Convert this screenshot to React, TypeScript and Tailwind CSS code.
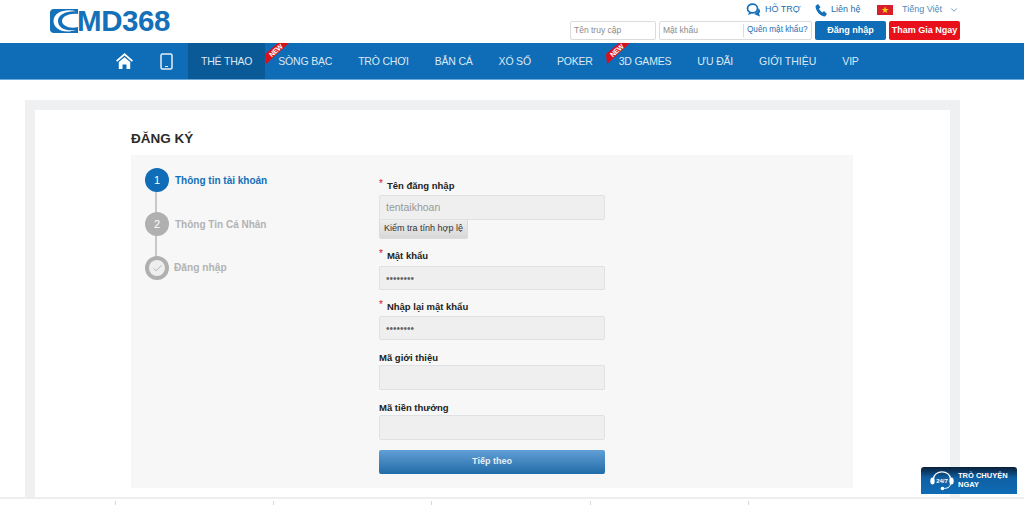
import React from "react";
import { ChevronDown, Check } from "lucide-react";

const navItems = [
    { label: "THỂ THAO", active: true },
    { label: "SÒNG BẠC", badge: true },
    { label: "TRÒ CHƠI" },
    { label: "BẮN CÁ" },
    { label: "XỔ SỐ" },
    { label: "POKER" },
    { label: "3D GAMES", badge: true },
    { label: "ƯU ĐÃI" },
    { label: "GIỚI THIỆU", wide: true },
    { label: "VIP" },
];

function NewBadge() {
    return (
        <div className="absolute left-0 top-0 w-[24px] h-[21px]">
            <svg width="24" height="21" viewBox="0 0 24 21" className="block">
                <polygon points="13,0 24,0 1,21 0,11" fill="#d9101a" />
            </svg>
            <span className="absolute left-[3px] top-[3px] text-[7px] leading-[9px] font-bold text-white -rotate-[42deg]">NEW</span>
        </div>
    );
}

function Logo() {
    return (
        <div className="flex items-center text-[#1470b8] h-[24px]">
            <svg width="28" height="24" viewBox="0 0 28 24" className="block">
                <path d="M4 0 H28 V24 H4 Q0 24 0 20 V4 Q0 0 4 0 Z" fill="#1470b8" />
                <path d="M27 2.5 C16 -1 3.5 3 3.5 12 C3.5 20.5 14 25 26 21 C16 22.5 8 19 8 12 C8 5.5 17 1.5 27 2.5 Z" fill="#fff" />
                <path d="M28 5 C20 4 12 7 12 12 C12 17 20 20 28 18 Z" fill="#fff" />
            </svg>
            <span className="text-[29.5px] leading-[24px] font-bold tracking-[-0.4px] ml-[-1px]">MD368</span>
        </div>
    );
}

function Field({ label, required, value, dots, inputClass }: { label: string; required?: boolean; value?: string; dots?: boolean; inputClass: string }) {
    return (
        <div className="flex flex-col">
            <div className="flex items-start h-[15px] text-[9.5px] leading-[15px] font-bold text-[#222]">
                {required && <span className="text-[#d9101a] font-normal mr-[4px] text-[10px] leading-[12px]">*</span>}
                <span>{label}</span>
            </div>
            <div
                className={`${inputClass} w-full border border-[#dfe2e4] rounded-[2px] bg-[#efefef] flex items-center px-[6px] ${dots ? "text-[10px] text-[#666]" : "text-[10.5px] text-[#999]"}`}
            >
                {value}
            </div>
        </div>
    );
}

export default function App() {
    return (
        <div className="w-[1024px] h-[505px] overflow-hidden relative bg-white font-['Liberation_Sans',Arial,sans-serif]">
            {/* top bar */}
            <div className="h-[43px] flex justify-between pl-[50px] pr-[64px]">
                <div className="pt-[9px]">
                    <Logo />
                </div>
                <div className="flex flex-col items-end pt-[2px]">
                    <div className="h-[14px] flex items-center text-[9px] text-[#1f6fae] mt-[1px] -mb-[1px]">
                        <svg width="15" height="14" viewBox="0 0 15 14" className="block mr-[4px]">
                            <ellipse cx="6.5" cy="5.5" rx="5" ry="4.3" fill="none" stroke="#1470b8" strokeWidth="1.7" />
                            <path d="M3 9.5 L2 12 L6 10.5 Z" fill="#1470b8" />
                            <path d="M12.5 5 C14.5 7 14.5 9.5 13 10.5 L14 13.5 L9 11.5 L8 10.8 C10 10.5 12.5 8 12.5 5 Z" fill="#1470b8" />
                        </svg>
                        <span className="w-[50px]">HỖ TRỢ</span>
                        <svg width="12" height="13" viewBox="0 0 12 13" className="block mr-[4px]">
                            <path d="M0.5 2 L3 0 L5.5 3.2 L4 4.8 C4.5 6.2 6 7.8 7.5 8.5 L9 7 L12 10 L10 12.5 C5.5 12.5 0.5 7 0.5 2 Z" fill="#1470b8" />
                        </svg>
                        <span className="w-[46px]">Liên hệ</span>
                        <div className="w-[16px] h-[10px] bg-[#d8202a] flex items-center justify-center text-[9px] leading-[10px] text-[#f7d417] mr-[9px]">★</div>
                        <span className="w-[47px] text-[#4f8cbd]">Tiếng Việt</span>
                        <ChevronDown size={10} className="text-[#4f8cbd] mr-[1px]" />
                    </div>
                    <div className="flex items-center mt-[5px]">
                        <div className="w-[86px] h-[19px] border border-[#dcdcdc] rounded-[2px] flex items-center px-[3px] text-[8.5px] text-[#8a8a8a]">Tên truy cập</div>
                        <div className="ml-[3px] w-[153px] h-[19px] border border-[#dcdcdc] rounded-[2px] flex items-center text-[8.5px]">
                            <span className="w-[84px] pl-[3px] text-[#8a8a8a] border-r border-[#dcdcdc] leading-[13px]">Mật khẩu</span>
                            <span className="pl-[3px] text-[8.2px] text-[#1f6fae]">Quên mật khẩu?</span>
                        </div>
                        <button className="ml-[3px] w-[71px] h-[19px] bg-[#0f6cb6] rounded-[2px] text-white text-[9px] font-bold">Đăng nhập</button>
                        <button className="ml-[3px] w-[71px] h-[19px] bg-[#e8101a] rounded-[2px] text-white text-[9px] font-bold">Tham Gia Ngay</button>
                    </div>
                </div>
            </div>

            {/* nav */}
            <nav className="h-[37px] bg-[#0f6cb6] border-b border-[#6ea9db] flex items-stretch pl-[116px]">
                <div className="w-[17px] flex items-center">
                    <svg width="17" height="16" viewBox="0 0 17 16" className="block">
                        <path d="M8.5 0 L17 7.5 L15.8 8.8 L8.5 2.6 L1.2 8.8 L0 7.5 Z M2.8 9 L8.5 4.2 L14.2 9 V16 H10.5 V11.5 H6.5 V16 H2.8 Z" fill="#fff" />
                    </svg>
                </div>
                <div className="w-[55px] flex items-center justify-center pl-[11px]">
                    <svg width="13" height="17" viewBox="0 0 13 17" className="block">
                        <rect x="1" y="1" width="11" height="15" rx="1.5" fill="none" stroke="#e6f0f8" strokeWidth="1.5" />
                        <rect x="5" y="13" width="3" height="1" fill="#e6f0f8" />
                    </svg>
                </div>
                {navItems.map((item) => (
                    <div
                        key={item.label}
                        className={`relative flex items-center px-[13px] pt-[2px] text-[10.5px] whitespace-nowrap text-[#dbe9f5] ${item.wide ? "tracking-[0px]" : "tracking-[-0.2px]"} ${item.active ? "bg-[#0b5a98]" : ""}`}
                    >
                        {item.label}
                        {item.badge && <NewBadge />}
                    </div>
                ))}
            </nav>

            {/* content */}
            <div className="mt-[20px] mx-[25px] w-[935px] h-[397px] bg-[#eff0f2] px-[10px] pt-[10px]">
                <div className="bg-white h-full pl-[96px] pt-[20px] pr-[97px]">
                    <h1 className="text-[13.5px] leading-[18px] font-bold text-[#2b2b2b]">ĐĂNG KÝ</h1>
                    <div className="mt-[7px] h-[333px] bg-[#f7f7f7] flex">
                        <div className="w-[248px] pl-[14px] pt-[13px] relative">
                            <div className="absolute left-[24px] top-[30px] w-[2px] h-[90px] bg-[#c8c8c8]" />
                            <div className="relative flex items-center h-[24px] text-[10px] font-bold text-[#1470b8]">
                                <div className="w-[24px] h-[24px] rounded-full bg-[#0f6cb6] text-white font-normal text-[11px] flex items-center justify-center mr-[6px]">1</div>
                                Thông tin tài khoản
                            </div>
                            <div className="relative flex items-center h-[24px] mt-[20px] text-[10px] font-bold text-[#b3b3b3]">
                                <div className="w-[24px] h-[24px] rounded-full bg-[#b0b0b0] text-white font-normal text-[11px] flex items-center justify-center mr-[6px]">2</div>
                                Thông Tin Cá Nhân
                            </div>
                            <div className="relative flex items-center h-[24px] mt-[20px] text-[10.2px] font-bold text-[#b3b3b3]">
                                <div className="w-[24px] h-[24px] rounded-full bg-[#b0b0b0] flex items-center justify-center mr-[5px]">
                                    <div className="w-[16px] h-[16px] rounded-full bg-[#eeeeee] flex items-center justify-center">
                                        <Check size={11} className="text-[#b0b0b0]" />
                                    </div>
                                </div>
                                Đăng nhập
                            </div>
                        </div>
                        <div className="w-[226px] pt-[23px]">
                            <Field label="Tên đăng nhập" required value="tentaikhoan" inputClass="mt-[2px] h-[25px]" />
                            <button className="block h-[20px] w-[89px] -mt-[1px] border border-[#dcdcdc] rounded-b-[2px] bg-gradient-to-b from-[#eeeeee] to-[#d8d8d8] text-[9px] text-[#333]">Kiểm tra tính hợp lệ</button>
                            <div className="mt-[9px]">
                                <Field label="Mật khẩu" required dots value="••••••••" inputClass="mt-[3px] h-[24px]" />
                            </div>
                            <div className="mt-[9px]">
                                <Field label="Nhập lại mật khẩu" required dots value="••••••••" inputClass="mt-[2px] h-[24px]" />
                            </div>
                            <div className="mt-[10px]">
                                <Field label="Mã giới thiệu" inputClass="h-[25px]" />
                            </div>
                            <div className="mt-[10px]">
                                <Field label="Mã tiền thưởng" inputClass="h-[25px]" />
                            </div>
                            <button className="mt-[10px] block w-full h-[24px] rounded-[2px] bg-gradient-to-b from-[#619fd6] to-[#1f6ca8] text-[#e8eef4] text-[9px] font-bold">Tiếp theo</button>
                        </div>
                    </div>
                </div>
            </div>

            {/* footer */}
            <div className="h-[8px] border-t-2 border-[#eeeeee] flex pl-[115px] pt-[2px]">
                {[0, 1, 2, 3, 4].map((i) => (
                    <div key={i} className="w-[158.2px] h-[6px] border-l border-[#d8d8d8]" />
                ))}
            </div>

            {/* chat widget */}
            <div className="absolute left-[921px] top-[467px] w-[96px] h-[27px] rounded-t-[3px] bg-gradient-to-b from-[#08203a] via-[#0f5fa3] via-40% to-[#0f6cb6] flex items-center pl-[9px]">
                <div className="relative w-[24px] h-[21px] flex items-center justify-center mr-[4px]">
                    <svg width="24" height="21" viewBox="0 0 24 21" className="absolute inset-0 block">
                        <path d="M3.5 9 C3.5 -0.5 20.5 -0.5 20.5 9" fill="none" stroke="#fff" strokeWidth="1.2" />
                        <ellipse cx="2.5" cy="11" rx="2.2" ry="3.6" fill="#fff" />
                        <ellipse cx="21.5" cy="11" rx="2.2" ry="3.6" fill="#fff" />
                        <path d="M20.5 14 C20 17.5 17 18.5 13 18.5" fill="none" stroke="#fff" strokeWidth="1" />
                        <circle cx="12.5" cy="18.5" r="1.8" fill="#fff" />
                    </svg>
                    <span className="relative text-[6px] font-bold text-white leading-none">24/7</span>
                </div>
                <div className="text-[7.5px] leading-[8.5px] font-bold text-white">
                    TRÒ CHUYỆN
                    <br />
                    NGAY
                </div>
            </div>
        </div>
    );
}
